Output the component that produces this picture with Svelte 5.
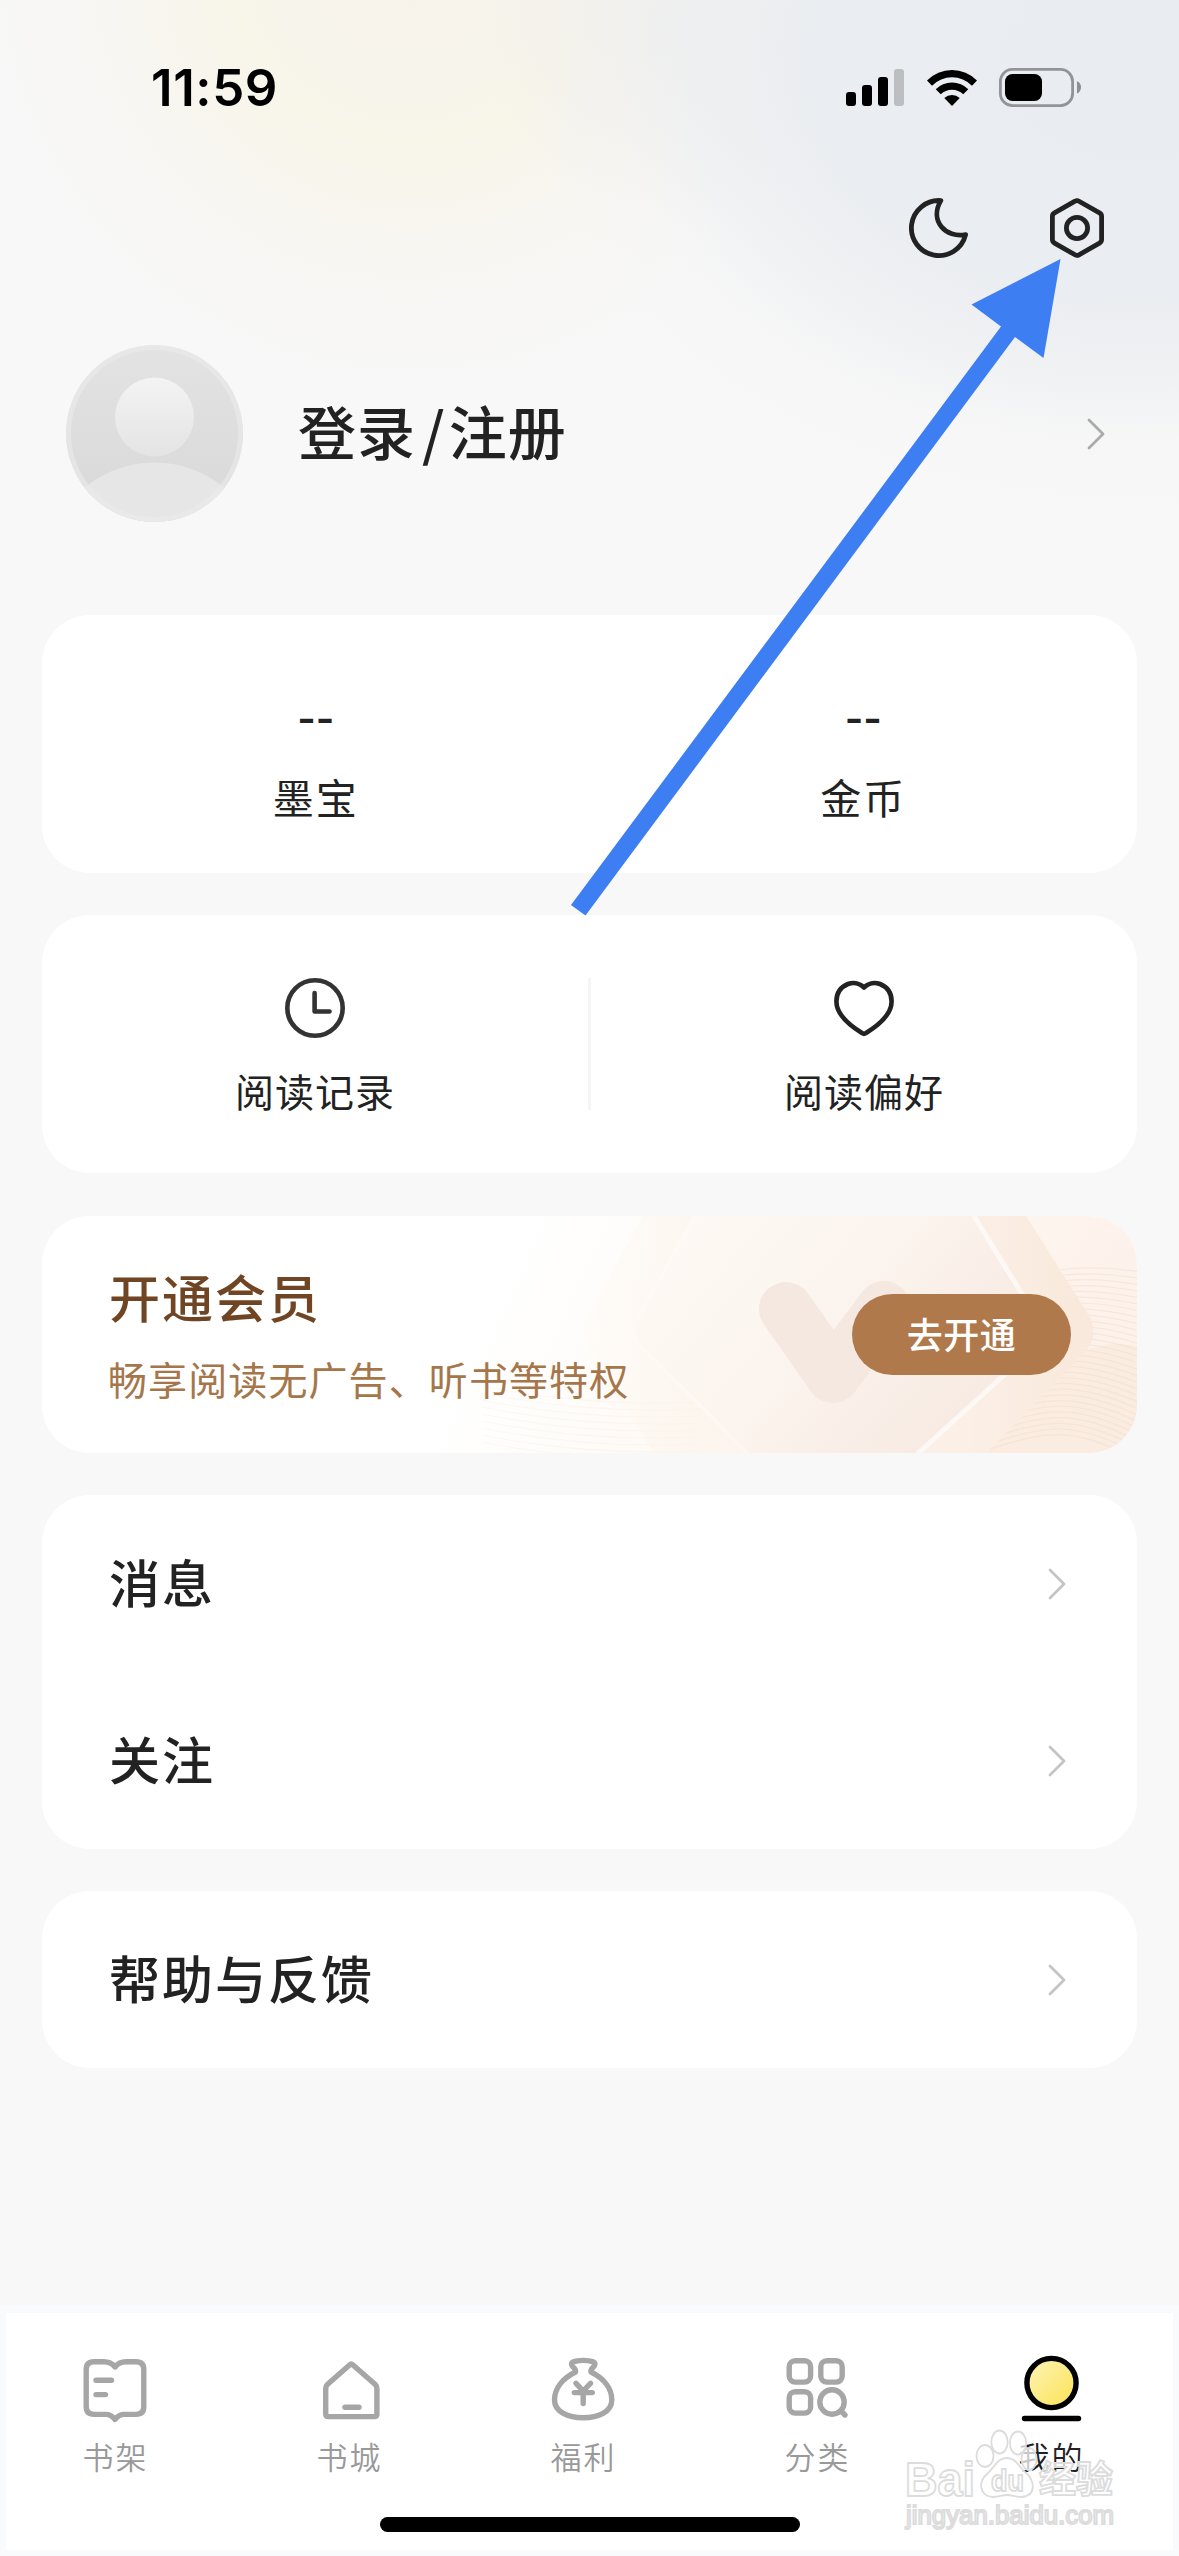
<script lang="ts">
	type Tab = { id: string; label: string; active?: boolean };

	const stats = [
		{ label: '墨宝', value: '--' },
		{ label: '金币', value: '--' }
	];

	const menuGroups = [['消息', '关注'], ['帮助与反馈']];

	const tabs: Tab[] = [
		{ id: 'shelf', label: '书架' },
		{ id: 'store', label: '书城' },
		{ id: 'welfare', label: '福利' },
		{ id: 'category', label: '分类' },
		{ id: 'mine', label: '我的', active: true }
	];

	const rightWaves = Array.from({ length: 30 }, (_, i) => i * 5.5);
	const leftWaves = Array.from({ length: 9 }, (_, i) => i * 7);
</script>

{#snippet chevron()}
	<svg class="chevron" width="18" height="32" viewBox="0 0 18 32">
		<path d="M2 2 L16 16 L2 30" />
	</svg>
{/snippet}

<div class="page">
	<div class="status">
		<span class="time">11:59</span>
		<div class="indicators">
			<svg width="58" height="37" viewBox="0 0 58 37">
				<rect x="0" y="23" width="10" height="14" rx="3" />
				<rect x="16" y="16" width="10" height="21" rx="3" />
				<rect x="32" y="8" width="10" height="29" rx="3" />
				<rect x="48" y="0" width="10" height="37" rx="3" fill="#bcbec2" />
			</svg>
			<svg class="wifi" width="50" height="38" viewBox="0 0 50 38">
				<path d="M0 11.5 A35 35 0 0 1 50 11.5 L45 16.7 A28 28 0 0 0 5 16.7 Z" />
				<path d="M8.7 20.3 A23 23 0 0 1 41.3 20.3 L36.2 25.3 A16 16 0 0 0 13.8 25.3 Z" />
				<path d="M17.3 29 A11.5 11.5 0 0 1 32.7 29 L25 37 Z" />
			</svg>
			<svg class="battery" width="82" height="39" viewBox="0 0 82 39">
				<rect x="1.4" y="1.4" width="72.2" height="36.2" rx="12" fill="none" stroke="#929497" stroke-width="2.8" />
				<rect x="6" y="6" width="37" height="27" rx="7.5" />
				<path d="M78 13 Q82 15 82 19.3 Q82 23.6 78 25.6 Z" fill="#8d8f92" />
			</svg>
		</div>
	</div>

	<div class="actions">
		<svg width="60" height="60" viewBox="0 0 60 60">
			<path d="M31.8 2.6 A27.5 27.5 0 1 0 56.6 36.6 C37 40.5 20 23 31.8 2.6 Z" />
		</svg>
		<svg width="54" height="60" viewBox="0 0 54 60">
			<path d="M25 3.2 Q27 2 29 3.2 L49.5 14.9 Q51.6 16.1 51.6 18.4 V41.6 Q51.6 43.9 49.5 45.1 L29 56.8 Q27 58 25 56.8 L4.5 45.1 Q2.4 43.9 2.4 41.6 V18.4 Q2.4 16.1 4.5 14.9 Z" />
			<circle cx="27" cy="30" r="10.6" />
		</svg>
	</div>

	<div class="profile">
		<svg width="177" height="177" viewBox="0 0 177 177">
			<defs>
				<clipPath id="avatar-clip"><circle cx="88.5" cy="88.5" r="88.5" /></clipPath>
				<linearGradient id="head" x1="0" y1="0" x2="0" y2="1">
					<stop offset="0" stop-color="#f3f3f3" />
					<stop offset="1" stop-color="#e4e4e4" />
				</linearGradient>
				<linearGradient id="avatar-bg" x1="0" y1="0" x2="0" y2="1">
					<stop offset="0" stop-color="#e3e3e3" />
					<stop offset="0.8" stop-color="#dadada" />
				</linearGradient>
			</defs>
			<g clip-path="url(#avatar-clip)">
				<rect width="177" height="177" fill="url(#avatar-bg)" />
				<circle cx="88.5" cy="226.5" r="109" fill="#e6e6e6" />
				<circle cx="88.5" cy="72" r="39.5" fill="url(#head)" />
				<circle cx="88.5" cy="88.5" r="86" fill="none" stroke="#ebebeb" stroke-opacity="0.6" stroke-width="5" />
			</g>
		</svg>
		<span class="login">登录<i>/</i>注册</span>
		{@render chevron()}
	</div>

	<div class="cards">
		<div class="card pair">
			{#each stats as s}
				<div class="stat">
					<span class="stat-value">{s.value}</span>
					<span class="stat-label">{s.label}</span>
				</div>
			{/each}
		</div>

		<div class="card pair">
			<div class="entry">
				<svg width="60" height="60" viewBox="0 0 60 60" stroke="#333">
					<circle cx="30" cy="30" r="27.7" />
					<path d="M29.6 15 V33.5 H44.5" />
				</svg>
				<span>阅读记录</span>
			</div>
			<div class="divider"></div>
			<div class="entry">
				<svg width="60" height="60" viewBox="0 0 60 60" stroke="#222">
					<path d="M30 9.5 C25 4.5 18.5 4.3 14 6 C6 9.2 2.4 16 2.4 23.5 C2.4 36 15 47 28.3 55.2 Q30 56.4 31.7 55.2 C45 47 57.6 36 57.6 23.5 C57.6 16 54 9.2 46 6 C41.5 4.3 35 4.5 30 9.5 Z" />
				</svg>
				<span>阅读偏好</span>
			</div>
		</div>

		<div class="card vip">
			<svg class="vip-art" width="1095" height="238" viewBox="0 0 1095 238">
				<defs>
					<linearGradient id="vip-bg" x1="0" y1="0" x2="1" y2="0.1">
						<stop offset="0.44" stop-color="#fff" />
						<stop offset="0.66" stop-color="#fefaf5" />
						<stop offset="1" stop-color="#fdf2eb" />
					</linearGradient>
					<linearGradient id="hex-outer" x1="0" y1="0" x2="1" y2="0">
						<stop offset="0" stop-color="#fdf4ea" stop-opacity="0.1" />
						<stop offset="0.2" stop-color="#fcf4ec" stop-opacity="0.6" />
						<stop offset="0.75" stop-color="#fbefe6" />
						<stop offset="1" stop-color="#f9e8db" />
					</linearGradient>
					<linearGradient id="hex-inner" x1="0" y1="0" x2="1" y2="0.5">
						<stop offset="0" stop-color="#fefaf5" />
						<stop offset="0.5" stop-color="#fcf5ef" />
						<stop offset="1" stop-color="#f7eae2" />
					</linearGradient>
				</defs>
				<rect width="1095" height="238" fill="url(#vip-bg)" />
				{#each leftWaves as y}
					<path class="wave faint" d="M440 {170 + y} C500 {182 + y} 570 {190 + y} 660 {186 + y}" />
				{/each}
				<path d="M1000 160 Q1050 120 1095 130 V238 H940 Z" fill="#f9e8da" opacity="0.6" />
				{#each rightWaves as y}
					<path class="wave" d="M940 {76 + y} C1000 {54 + y * 1.02} 1030 {46 + y} 1100 {56 + y * 1.2}" />
				{/each}
				<path d="M601 0 L546 100 Q538 118 549 138 L612 238 H944 L1045 133 Q1056 120 1048 101 L984 0 Z" fill="url(#hex-outer)" />
				<path d="M652 0 L594 106 Q588 117 596 127 L707 238 H875 L992 132 Q1004 119 996 104 L932 0 Z" fill="url(#hex-inner)" />
				<path class="hex-line" d="M652 0 L594 106 Q588 117 596 127 L707 238" />
				<path class="hex-line strong" d="M875 238 L992 132 Q1004 119 996 104 L932 0" />
				<path d="M744 93 L791 160 L842 92" fill="none" stroke="#f5e8e0" stroke-width="54" stroke-linecap="round" stroke-linejoin="round" />
			</svg>
			<div class="vip-text">
				<h2>开通会员</h2>
				<p>畅享阅读无广告、听书等特权</p>
			</div>
			<button>去开通</button>
		</div>

		{#each menuGroups as group}
			<div class="card">
				{#each group as item}
					<div class="menu-row">
						<span>{item}</span>
						{@render chevron()}
					</div>
				{/each}
			</div>
		{/each}
	</div>

	<div class="tabbar">
		<div class="tabs">
			{#each tabs as t}
				<div class="tab" class:active={t.active}>
					<svg width="70" height="70" viewBox="0 0 70 70">
						{#if t.id === 'shelf'}
							<path d="M35 12 C31 7 27 6.8 24 6.8 H14 Q6.2 6.8 6.2 14.6 V51.6 Q6.2 59.4 14 59.4 H26 C31 59.4 33 62 35 64.5 C37 62 39 59.4 44 59.4 H56 Q63.8 59.4 63.8 51.6 V14.6 Q63.8 6.8 56 6.8 H46 C43 6.8 39 7 35 12 Z" />
							<path d="M16 25.3 H31.5 M16 39.6 H25.5" />
						{:else if t.id === 'store'}
							<path d="M35.5 10 Q37.2 8.4 39 10 L61 29.2 Q62.9 31 62.9 33.5 V59 Q62.9 61.6 60.3 61.6 H14.3 Q11.7 61.6 11.7 59 V33.5 Q11.7 31 13.6 29.2 Z" />
							<path d="M31 52.3 H45" />
						{:else if t.id === 'welfare'}
							<path d="M27.5 17 C28.5 13 23.5 12.5 23.5 9 C23.5 4.2 47 4.2 47 9 C47 12.5 42 13 43 17 C54 22.5 63.8 32 63.8 45 C63.8 57 50 62.8 35.2 62.8 C20.5 62.8 6.5 57 6.5 45 C6.5 32 16.5 22.5 27.5 17 Z" />
							<path d="M28 28.3 L35.2 36 L42.5 28.3 M26.3 37.6 H44.3 M35.2 37.6 V48.5" />
						{:else if t.id === 'category'}
							<rect x="7.2" y="5.7" width="21.4" height="21.4" rx="6" />
							<rect x="38.8" y="5.7" width="21.4" height="21.4" rx="6" />
							<rect x="7.2" y="36.7" width="21.4" height="21.4" rx="6" />
							<circle cx="50" cy="47" r="12.2" />
							<path d="M59 56 L63 60" />
						{:else}
							<defs>
								<linearGradient id="sun" x1="0" y1="0" x2="1" y2="1">
									<stop offset="0.1" stop-color="#fdf2b0" />
									<stop offset="0.9" stop-color="#fbe45c" />
								</linearGradient>
							</defs>
							<circle cx="35.5" cy="29" r="24.6" fill="url(#sun)" />
							<path d="M8.5 64.5 H62.5" />
						{/if}
					</svg>
					<span>{t.label}</span>
				</div>
			{/each}
		</div>
		<div class="home-indicator"></div>
	</div>

	<svg class="watermark" width="220" height="110" viewBox="0 0 220 110">
		<g class="mark">
			<ellipse cx="85" cy="31" rx="8.5" ry="11" />
			<ellipse cx="99.5" cy="17" rx="8.2" ry="11.5" />
			<ellipse cx="118" cy="18" rx="8.2" ry="11.5" />
			<ellipse cx="129" cy="34" rx="7.5" ry="11" />
			<path d="M107 33 C116 33 118 41 125 47 C135 55 137 71 121 72 C115 72 112 70 107 70 C102 70 99 72 93 72 C79 71 78 57 87 49 C95 42 97 33 107 33 Z" />
			<text x="5" y="71" font-size="48" font-weight="700" textLength="70" lengthAdjust="spacingAndGlyphs">Bai</text>
			<text x="91" y="66" font-size="30" font-weight="700" textLength="33" lengthAdjust="spacingAndGlyphs">du</text>
			<text x="139" y="68" font-size="37" font-weight="700" textLength="74" lengthAdjust="spacingAndGlyphs">经验</text>
			<text x="6" y="99" font-size="25" textLength="208" lengthAdjust="spacingAndGlyphs">jingyan.baidu.com</text>
		</g>
	</svg>

	<svg class="pointer" width="1179" height="930" viewBox="0 0 1179 930">
		<path d="M1060.5 259 L971.5 304.5 L1001 326.5 L571 905 L585.5 915.5 L1015 337 L1043.5 358 Z" />
	</svg>
</div>

<style>
	:global(body) {
		background: #f8f8f8;
	}

	.page {
		position: relative;
		display: flex;
		flex-direction: column;
		width: 1179px;
		height: 2556px;
		overflow: hidden;
		color: #222;
		font-family: 'Noto Sans CJK SC', sans-serif;
		background:
			radial-gradient(ellipse 620px 450px at 1140px 60px, #e9ecf1 0, #eaedf1 50%, rgba(236, 238, 241, 0.75) 68%, rgba(242, 243, 244, 0.3) 85%, rgba(248, 248, 248, 0) 100%),
			radial-gradient(circle 200px at 680px 20px, rgba(236, 236, 235, 0.8) 0, rgba(240, 240, 239, 0) 100%),
			radial-gradient(circle 430px at 410px -40px, #f7f3ec 0, #f7f4eb 32%, #f8f5e9 42%, #f8f5ed 55%, rgba(248, 246, 242, 0.7) 76%, rgba(248, 248, 248, 0) 100%),
			#f8f8f8;
	}

	.status {
		display: flex;
		justify-content: space-between;
		height: 39px;
		padding: 68px 98px 0 151px;
	}

	.time {
		font-family: Inter, sans-serif;
		font-size: 51px;
		font-weight: 600;
		line-height: 40px;
		letter-spacing: 0.6px;
		color: #000;
	}

	.indicators {
		display: flex;
		align-items: center;
	}

	.wifi {
		margin-left: 23px;
	}

	.battery {
		margin-left: 22px;
	}

	.actions {
		display: flex;
		justify-content: flex-end;
		gap: 81px;
		margin-top: 91px;
		padding-right: 75px;
	}

	.actions svg {
		fill: none;
		stroke: #222;
		stroke-width: 4.8;
		stroke-linejoin: round;
	}

	.profile {
		display: flex;
		align-items: center;
		margin-top: 87px;
		padding: 0 74px 0 66px;
	}

	.login {
		flex: 1;
		margin: 0 0 8px 55px;
		font-size: 58px;
		font-weight: 500;
		letter-spacing: 1px;
		line-height: 80px;
	}

	.login i {
		margin: 0 3px 0 6px;
		font-style: normal;
	}

	.chevron {
		fill: none;
		stroke: #c4c4c4;
		stroke-width: 2.8;
		stroke-linecap: round;
		stroke-linejoin: round;
	}

	.profile .chevron {
		stroke: #aaa;
	}

	.cards {
		display: flex;
		flex-direction: column;
		gap: 42px;
		margin: 93px 42px 0;
	}

	.card {
		border-radius: 48px;
		background: #fff;
	}

	.pair {
		display: flex;
		align-items: center;
		height: 258px;
	}

	.stat,
	.entry {
		flex: 1;
		display: flex;
		flex-direction: column;
		align-items: center;
	}

	.stat-value {
		font-family: Inter, sans-serif;
		font-size: 40px;
		font-weight: 600;
		line-height: 50px;
		margin-top: 31px;
	}

	.stat-label {
		margin-top: 22px;
		font-size: 41px;
		line-height: 60px;
		letter-spacing: 2px;
	}

	.entry svg {
		margin-top: 9px;
		fill: none;
		stroke-width: 4.6;
		stroke-linecap: round;
		stroke-linejoin: round;
	}

	.entry span {
		margin-top: 22px;
		font-size: 39px;
		line-height: 60px;
		letter-spacing: 1px;
	}

	.divider {
		width: 3px;
		height: 132px;
		background: #f5f5f5;
	}

	.vip {
		position: relative;
		display: flex;
		align-items: center;
		justify-content: space-between;
		height: 237px;
		margin-top: 1px;
		padding: 0 66px;
		box-sizing: border-box;
		overflow: hidden;
	}

	.vip-art {
		position: absolute;
		inset: 0;
	}

	.hex-line {
		fill: none;
		stroke: #fff;
		stroke-opacity: 0.3;
		stroke-width: 3;
	}

	.hex-line.strong {
		stroke-opacity: 0.6;
		stroke-width: 5;
	}

	.wave {
		fill: none;
		stroke: #f3dfcc;
		stroke-width: 1.2;
		opacity: 0.6;
	}

	.wave.faint {
		opacity: 0.2;
	}

	.vip-text,
	.vip button {
		position: relative;
	}

	.vip h2 {
		margin: 0 0 0 1px;
		font-size: 51px;
		font-weight: 500;
		line-height: 66px;
		letter-spacing: 2px;
		color: #704523;
	}

	.vip p {
		margin: 21px 0 0;
		font-size: 39px;
		line-height: 56px;
		letter-spacing: 1.1px;
		color: #a6764b;
	}

	.vip button {
		width: 219px;
		height: 81px;
		padding: 0 0 4px;
		border: 0;
		border-radius: 41px;
		background: #b0794c;
		color: #fff;
		font: 500 36px 'Noto Sans CJK SC', sans-serif;
		letter-spacing: 0.5px;
	}

	.menu-row {
		display: flex;
		align-items: center;
		justify-content: space-between;
		height: 177px;
		padding: 0 71px 0 67px;
		font-size: 51px;
		font-weight: 500;
		letter-spacing: 2px;
	}

	.menu-row span {
		margin-bottom: 5px;
	}

	.tabbar {
		display: flex;
		flex-direction: column;
		height: 237px;
		margin-top: auto;
		border: 6px solid #f9fafc;
		border-top-width: 8px;
		background: #fff;
	}

	.tabs {
		display: flex;
		justify-content: space-between;
		padding: 42px 82px 0 69px;
	}

	.tab {
		display: flex;
		flex-direction: column;
		align-items: center;
		width: 80px;
		color: #999;
	}

	.tab svg {
		fill: none;
		stroke: #a6a6a6;
		stroke-width: 5.4;
		stroke-linecap: round;
		stroke-linejoin: round;
	}

	.tab span {
		margin-top: 9px;
		margin-left: 1px;
		font-size: 31px;
		font-weight: 350;
		line-height: 44px;
		letter-spacing: 2px;
	}

	.tab.active {
		color: #222;
	}

	.tab.active svg {
		margin-top: -1px;
		margin-bottom: 1px;
		stroke: #000;
	}

	.home-indicator {
		width: 420px;
		height: 15px;
		margin: 39px auto 0;
		border-radius: 8px;
		background: #000;
	}

	.watermark {
		position: absolute;
		left: 900px;
		top: 2425px;
	}

	.mark {
		fill: #fff;
		fill-opacity: 0.75;
		stroke: #dcdcdc;
		stroke-width: 1.8;
		font-family: 'Liberation Sans', 'Noto Sans CJK SC', sans-serif;
	}

	.pointer {
		position: absolute;
		left: 0;
		top: 0;
		fill: #3d7ef2;
	}
</style>
